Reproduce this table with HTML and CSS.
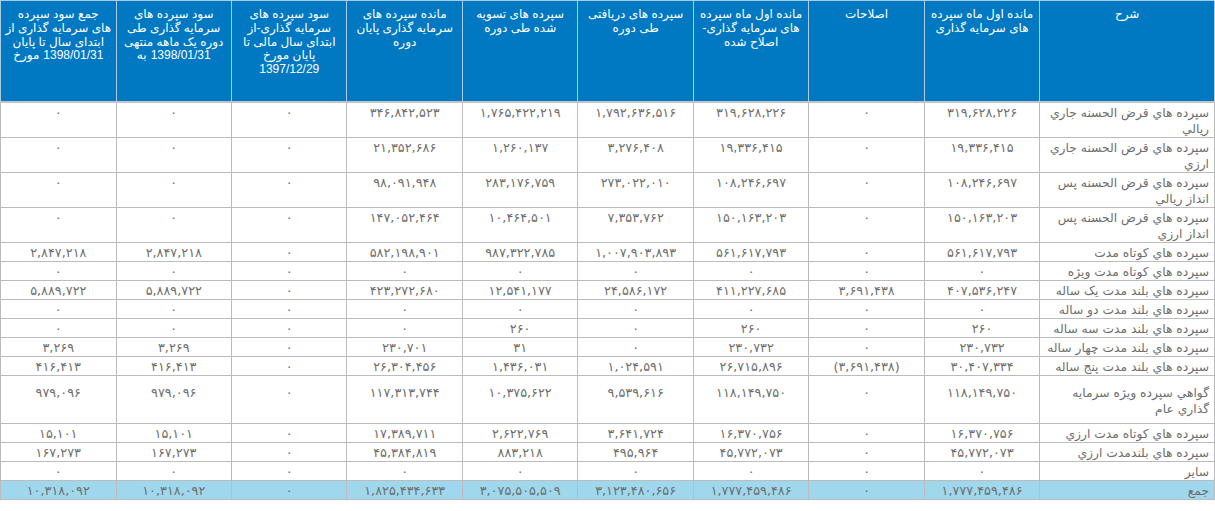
FILE: index.html
```html
<!DOCTYPE html>
<html lang="fa" dir="rtl">
<head>
<meta charset="utf-8">
<title>سپرده های سرمایه گذاری</title>
<link rel="stylesheet" href="styles.css">
</head>
<body>
<table class="report">
  <colgroup>
    <col class="col-desc">
    <col class="col-num"><col class="col-num"><col class="col-num">
    <col class="col-num"><col class="col-num"><col class="col-num">
    <col class="col-num"><col class="col-num"><col class="col-num">
  </colgroup>
  <thead>
    <tr>
      <th>شرح</th>
      <th>مانده اول ماه سپرده<br>های سرمایه گذاری</th>
      <th>اصلاحات</th>
      <th>مانده اول ماه سپرده<br>های سرمایه گذاری-<br>اصلاح شده</th>
      <th>سپرده های دریافتی<br>طی دوره</th>
      <th>سپرده های تسویه<br>شده طی دوره</th>
      <th>مانده سپرده های<br>سرمایه گذاری پایان<br>دوره</th>
      <th>سود سپرده های<br>سرمایه گذاری-از<br>ابتدای سال مالی تا<br>پایان مورخ<br>1397/12/29</th>
      <th>سود سپرده های<br>سرمایه گذاری طی<br>دوره یک ماهه منتهی<br><span class="date-line"><span>به</span><span>1398/01/31</span></span></th>
      <th>جمع سود سپرده<br>های سرمایه گذاری از<br>ابتدای سال تا پایان<br><span class="date-line"><span>مورخ</span><span>1398/01/31</span></span></th>
    </tr>
  </thead>
  <tbody>
    <tr>
      <td class="desc">سپرده هاي قرض الحسنه جاري<br>ريالي</td>
      <td>۳۱۹,۶۲۸,۲۲۶</td><td>۰</td><td>۳۱۹,۶۲۸,۲۲۶</td><td>۱,۷۹۲,۶۳۶,۵۱۶</td><td>۱,۷۶۵,۴۲۲,۲۱۹</td><td>۳۴۶,۸۴۲,۵۲۳</td><td>۰</td><td>۰</td><td>۰</td>
    </tr>
    <tr>
      <td class="desc">سپرده هاي قرض الحسنه جاري<br>ارزي</td>
      <td>۱۹,۳۳۶,۴۱۵</td><td>۰</td><td>۱۹,۳۳۶,۴۱۵</td><td>۳,۲۷۶,۴۰۸</td><td>۱,۲۶۰,۱۳۷</td><td>۲۱,۳۵۲,۶۸۶</td><td>۰</td><td>۰</td><td>۰</td>
    </tr>
    <tr>
      <td class="desc">سپرده هاي قرض الحسنه پس<br>انداز ريالي</td>
      <td>۱۰۸,۲۴۶,۶۹۷</td><td>۰</td><td>۱۰۸,۲۴۶,۶۹۷</td><td>۲۷۳,۰۲۲,۰۱۰</td><td>۲۸۳,۱۷۶,۷۵۹</td><td>۹۸,۰۹۱,۹۴۸</td><td>۰</td><td>۰</td><td>۰</td>
    </tr>
    <tr>
      <td class="desc">سپرده هاي قرض الحسنه پس<br>انداز ارزي</td>
      <td>۱۵۰,۱۶۳,۲۰۳</td><td>۰</td><td>۱۵۰,۱۶۳,۲۰۳</td><td>۷,۳۵۳,۷۶۲</td><td>۱۰,۴۶۴,۵۰۱</td><td>۱۴۷,۰۵۲,۴۶۴</td><td>۰</td><td>۰</td><td>۰</td>
    </tr>
    <tr>
      <td class="desc">سپرده هاي كوتاه مدت</td>
      <td>۵۶۱,۶۱۷,۷۹۳</td><td>۰</td><td>۵۶۱,۶۱۷,۷۹۳</td><td>۱,۰۰۷,۹۰۳,۸۹۳</td><td>۹۸۷,۳۲۲,۷۸۵</td><td>۵۸۲,۱۹۸,۹۰۱</td><td>۰</td><td>۲,۸۴۷,۲۱۸</td><td>۲,۸۴۷,۲۱۸</td>
    </tr>
    <tr>
      <td class="desc">سپرده هاي كوتاه مدت ويژه</td>
      <td>۰</td><td>۰</td><td>۰</td><td>۰</td><td>۰</td><td>۰</td><td>۰</td><td>۰</td><td>۰</td>
    </tr>
    <tr>
      <td class="desc">سپرده هاي بلند مدت يک ساله</td>
      <td>۴۰۷,۵۳۶,۲۴۷</td><td>۳,۶۹۱,۴۳۸</td><td>۴۱۱,۲۲۷,۶۸۵</td><td>۲۴,۵۸۶,۱۷۲</td><td>۱۲,۵۴۱,۱۷۷</td><td>۴۲۳,۲۷۲,۶۸۰</td><td>۰</td><td>۵,۸۸۹,۷۲۲</td><td>۵,۸۸۹,۷۲۲</td>
    </tr>
    <tr>
      <td class="desc">سپرده هاي بلند مدت دو ساله</td>
      <td>۰</td><td>۰</td><td>۰</td><td>۰</td><td>۰</td><td>۰</td><td>۰</td><td>۰</td><td>۰</td>
    </tr>
    <tr>
      <td class="desc">سپرده هاي بلند مدت سه ساله</td>
      <td>۲۶۰</td><td>۰</td><td>۲۶۰</td><td>۰</td><td>۲۶۰</td><td>۰</td><td>۰</td><td>۰</td><td>۰</td>
    </tr>
    <tr>
      <td class="desc">سپرده هاي بلند مدت چهار ساله</td>
      <td>۲۳۰,۷۳۲</td><td>۰</td><td>۲۳۰,۷۳۲</td><td>۰</td><td>۳۱</td><td>۲۳۰,۷۰۱</td><td>۰</td><td>۳,۲۶۹</td><td>۳,۲۶۹</td>
    </tr>
    <tr>
      <td class="desc">سپرده هاي بلند مدت پنج ساله</td>
      <td>۳۰,۴۰۷,۳۳۴</td><td>(۳,۶۹۱,۴۳۸)</td><td>۲۶,۷۱۵,۸۹۶</td><td>۱,۰۲۴,۵۹۱</td><td>۱,۴۳۶,۰۳۱</td><td>۲۶,۳۰۴,۴۵۶</td><td>۰</td><td>۴۱۶,۴۱۳</td><td>۴۱۶,۴۱۳</td>
    </tr>
    <tr class="tall">
      <td class="desc">گواهي سپرده ويژه سرمايه<br>گذاري عام</td>
      <td>۱۱۸,۱۴۹,۷۵۰</td><td>۰</td><td>۱۱۸,۱۴۹,۷۵۰</td><td>۹,۵۳۹,۶۱۶</td><td>۱۰,۳۷۵,۶۲۲</td><td>۱۱۷,۳۱۳,۷۴۴</td><td>۰</td><td>۹۷۹,۰۹۶</td><td>۹۷۹,۰۹۶</td>
    </tr>
    <tr>
      <td class="desc">سپرده هاي كوتاه مدت ارزي</td>
      <td>۱۶,۳۷۰,۷۵۶</td><td>۰</td><td>۱۶,۳۷۰,۷۵۶</td><td>۳,۶۴۱,۷۲۴</td><td>۲,۶۲۲,۷۶۹</td><td>۱۷,۳۸۹,۷۱۱</td><td>۰</td><td>۱۵,۱۰۱</td><td>۱۵,۱۰۱</td>
    </tr>
    <tr>
      <td class="desc">سپرده هاي بلندمدت ارزي</td>
      <td>۴۵,۷۷۲,۰۷۳</td><td>۰</td><td>۴۵,۷۷۲,۰۷۳</td><td>۴۹۵,۹۶۴</td><td>۸۸۳,۲۱۸</td><td>۴۵,۳۸۴,۸۱۹</td><td>۰</td><td>۱۶۷,۲۷۳</td><td>۱۶۷,۲۷۳</td>
    </tr>
    <tr>
      <td class="desc">ساير</td>
      <td>۰</td><td>۰</td><td>۰</td><td>۰</td><td>۰</td><td>۰</td><td>۰</td><td>۰</td><td>۰</td>
    </tr>
    <tr class="total">
      <td class="desc">جمع</td>
      <td>۱,۷۷۷,۴۵۹,۴۸۶</td><td>۰</td><td>۱,۷۷۷,۴۵۹,۴۸۶</td><td>۳,۱۲۳,۴۸۰,۶۵۶</td><td>۳,۰۷۵,۵۰۵,۵۰۹</td><td>۱,۸۲۵,۴۳۴,۶۳۳</td><td>۰</td><td>۱۰,۳۱۸,۰۹۲</td><td>۱۰,۳۱۸,۰۹۲</td>
    </tr>
  </tbody>
</table>
</body>
</html>
```

FILE: styles.css
```css
html, body {
  margin: 0;
  padding: 0;
  background: #ffffff;
}

body {
  font-family: "DejaVu Sans", "Noto Sans", sans-serif;
}

.report {
  direction: rtl;
  border-collapse: collapse;
  table-layout: fixed;
  width: 1215px;
}

.col-desc {
  width: 174px;
}

.col-num {
  width: 115px;
}

.report th {
  background: #0079c2;
  color: #ffffff;
  font-family: "Liberation Sans", "DejaVu Sans", sans-serif;
  font-weight: normal;
  font-size: 12px;
  line-height: 13.75px;
  text-align: center;
  vertical-align: top;
  white-space: nowrap;
  padding: 7px 2px 0;
  height: 93px;
  border: 1px solid #a9cbe3;
  border-bottom: 2px solid #c4c4c4;
}

.date-line {
  display: inline-flex;
  flex-direction: row;
  direction: ltr;
  gap: 4px;
}

.report td {
  border: 1px solid #bcbcbc;
  color: #6e6e6e;
  font-size: 12.8px;
  line-height: 16px;
  padding: 2px 3px 0;
  text-align: center;
  vertical-align: top;
  white-space: nowrap;
}

.report td.desc {
  font-size: 12.3px;
  text-align: right;
  padding-right: 5px;
}

.report tr.tall td {
  padding-top: 9px;
  padding-bottom: 6px;
}

.report tr.total td {
  background: #9fd7ec;
}
```
